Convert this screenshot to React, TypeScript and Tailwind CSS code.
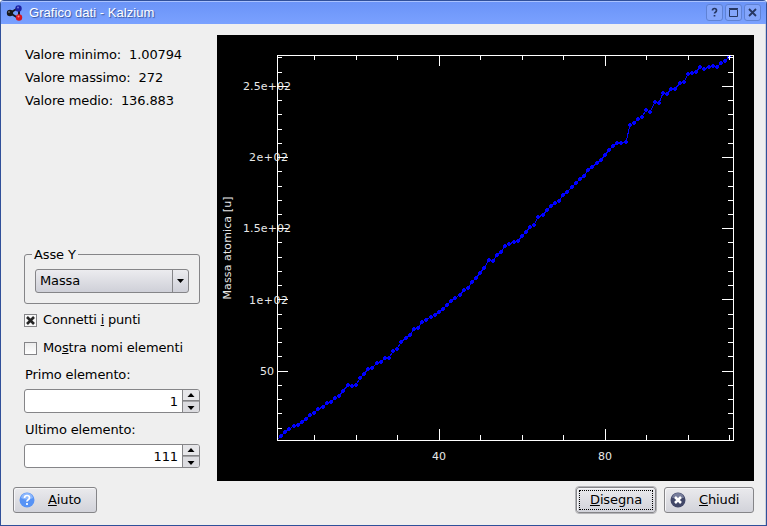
import React from "react";

const MASSES = [
  1.008, 4.003, 6.941, 9.012, 10.81, 12.01, 14.01, 16, 19, 20.18, 22.99, 24.31, 26.98, 28.09, 30.97, 32.07, 35.45,
  39.95, 39.1, 40.08, 44.96, 47.87, 50.94, 52, 54.94, 55.85, 58.93, 58.69, 63.55, 65.39, 69.72, 72.64, 74.92, 78.96,
  79.9, 83.8, 85.47, 87.62, 88.91, 91.22, 92.91, 95.94, 98.91, 101.07, 102.91, 106.42, 107.87, 112.41, 114.82, 118.71,
  121.76, 127.6, 126.9, 131.29, 132.91, 137.33, 138.91, 140.12, 140.91, 144.24, 146.92, 150.36, 151.96, 157.25, 158.93,
  162.5, 164.93, 167.26, 168.93, 173.04, 174.97, 178.49, 180.95, 183.84, 186.21, 190.23, 192.22, 195.08, 196.97,
  200.59, 204.38, 207.2, 208.98, 208.98, 209.99, 222.02, 223.02, 226.03, 227.03, 232.04, 231.04, 238.03, 237.05,
  244.06, 243.06, 247.07, 247.07, 251.08, 252.08, 257.1, 258.1, 259.1, 262.11, 261.11, 262.11, 263.12, 262.12, 265.13,
  266.13, 269, 272,
];

const px = (n: number) => Math.floor(222 + (n - 40) * 4.15 + 0.3);
const py = (m: number) => Math.max(20, Math.floor(336 - (m - 50) * 1.4245 - Math.max(0, (m - 110) * 0.0075)));

const points = MASSES.map((m, i) => ({ x: px(i + 1), y: py(m) }));
const xTicks = Array.from({ length: 11 }, (_, i) => (i + 1) * 10);
const yTicks = Array.from({ length: 27 }, (_, i) => (i + 1) * 10);

function Plot() {
  return (
    <svg className="block h-[446px] w-[537px] bg-black" viewBox="0 0 537 446">
      <g fill="#e8e8e8" fontFamily="'DejaVu Sans', sans-serif" fontSize="11">
        <text x="26" y="55" textLength="48">2.5e+02</text>
        <text x="32" y="126" textLength="39">2e+02</text>
        <text x="26" y="197" textLength="48">1.5e+02</text>
        <text x="32" y="269" textLength="39">1e+02</text>
        <text x="43" y="340" textLength="14">50</text>
        <text x="215" y="425" textLength="14">40</text>
        <text x="381" y="425" textLength="14">80</text>
        <text transform="translate(14 264.5) rotate(-90)" textLength="103">Massa atomica [u]</text>
      </g>
      <g shapeRendering="crispEdges">
        <polyline
          points={points.map((p) => `${p.x},${p.y}`).join(" ")}
          fill="none"
          stroke="#0000ff"
          strokeWidth="1"
        />
        {points.slice(1, -1).map((p, i) => (
          <path key={i} d={`M${p.x - 1} ${p.y - 2}h2v1h1v2h-1v1h-2v-1h-1v-2h1z`} fill="#0000ff" />
        ))}
        <g fill="white">
          <path d="M60 20h457v386h-457zM61 21v384h455v-384z" fillRule="evenodd" />
          {xTicks.map((n) => {
            const x = px(n);
            const major = n % 40 === 0;
            return (
              <g key={n}>
                <rect x={x} y="20" width="1" height={major ? 11 : 5} />
                <rect x={x} y={major ? 394 : 400} width="1" height={major ? 11 : 5} />
              </g>
            );
          })}
          {yTicks.map((m) => {
            const y = Math.floor(336.2 - (m - 50) * 1.4245);
            const major = m % 50 === 0;
            return (
              <g key={m}>
                <rect x="61" y={y} width={major ? 10 : 4} height="1" />
                <rect x={major ? 505 : 511} y={y} width={major ? 11 : 5} height="1" />
              </g>
            );
          })}
        </g>
      </g>
    </svg>
  );
}

function TitleButton({ children }: { children: React.ReactNode }) {
  return (
    <div className="flex h-[17px] w-[17px] items-center justify-center rounded-[3px] border border-[#5f82d4] bg-[#83a5fb]">
      <svg className="h-[11px] w-[11px] shrink-0" viewBox="0 0 11 11" fill="none" stroke="#263762">
        {children}
      </svg>
    </div>
  );
}

function SpinBox({ value }: { value: string }) {
  return (
    <div className="flex h-6 w-44 overflow-hidden rounded-[3px] border border-[#858588] bg-white">
      <div className="flex-1 pr-1 text-right leading-[23px]">{value}</div>
      <div className="flex w-[17px] flex-col border-l border-[#858588]">
        {["M4.500 7h7l-3.500-4z", "M4.500 4h7l-3.500 4z"].map((d, i) => (
          <div
            key={d}
            className={
              i === 0
                ? "h-[11px] border-b border-[#858588] bg-[#e6e6e9]"
                : "h-[11px] border-t border-[#a5a5a8] bg-[#dcdce0]"
            }
          >
            <svg className="block h-[10px] w-4" viewBox="0 0 16 10">
              <path d={d} fill="black" />
            </svg>
          </div>
        ))}
      </div>
    </div>
  );
}

const buttonStyle =
  "flex h-[26px] items-center rounded-[3px] border border-[#858588] bg-linear-to-b from-[#eaeaed] to-[#d2d3da] shadow-[inset_1px_1px_0_#f6f6f8]";

export default function App() {
  return (
    <div className="flex h-[526px] w-[767px] flex-col overflow-hidden rounded-t-[4px] border-x border-b border-[#30509a] bg-[#efefef] font-['DejaVu_Sans',sans-serif] text-[13px] tracking-[-0.12px] text-black">
      <div className="flex h-6 shrink-0 items-center border-t border-[#30509a] bg-linear-to-b from-[#6a93f7] to-[#7aa1ff] pr-[5px] pl-[5px] shadow-[inset_0_1px_0_#a9c2ff]">
        <svg className="h-[18px] w-[18px]" viewBox="0 0 18 18">
          <path d="M4 9l8-5M4 9l8 5M13 4v9" stroke="#181820" strokeWidth="2" />
          <circle cx="4" cy="9" r="3.200" fill="#18181a" />
          <circle cx="12.500" cy="4.500" r="3.200" fill="#1d22a4" />
          <circle cx="13" cy="13.500" r="3.200" fill="#d51420" />
          <circle cx="3" cy="8" r="1" fill="#66666c" />
          <circle cx="12" cy="3.500" r="1" fill="#737ad8" />
          <circle cx="12.500" cy="12.500" r="1" fill="#ff858c" />
        </svg>
        <div className="ml-[5px] flex-1 font-['Liberation_Sans',sans-serif] text-[13px] tracking-[0.05px] text-white [text-shadow:1px_1px_1px_#35539b]">
          Grafico dati - Kalzium
        </div>
        <div className="flex gap-[2px]">
          <TitleButton>
            <path d="M3.500 3.500q0-2 2-2t2 2q0 1-1 1.700t-1 1.300M5.500 8v1.500" strokeWidth="1.700" />
          </TitleButton>
          <TitleButton>
            <path d="M1.500 2.500h8v7h-8zM1 1.500h9" />
          </TitleButton>
          <TitleButton>
            <path d="M2 2l7 7M9 2l-7 7" strokeWidth="1.800" />
          </TitleButton>
        </div>
      </div>
      <div className="flex flex-1 flex-col border-r border-[#cdd0da]">
        <div className="mt-[11px] flex h-[446px] justify-between pr-[11px] pl-[23px]">
          <div className="flex w-44 flex-col">
            <div className="h-[203px] pt-2 pl-px leading-[23px] whitespace-pre">
              <div>Valore minimo:  1.00794</div>
              <div>Valore massimo:  272</div>
              <div>Valore medio:  136.883</div>
            </div>
            <fieldset className="mt-[9px] h-[57px] rounded-[3px] border border-[#858588] pl-[10px]">
              <legend className="-ml-[3px] h-[15px] px-[2px] leading-[15px]">Asse Y</legend>
              <div className="mt-[7px] flex h-6 w-[154px] rounded-[3px] border border-[#858588] bg-linear-to-b from-[#ececef] to-[#cfd0d8]">
                <div className="flex-1 pl-1 leading-[22px]">Massa</div>
                <div className="flex w-4 items-center justify-center border-l border-[#858588]">
                  <svg className="h-1 w-[7px]" viewBox="0 0 7 4">
                    <path d="M0 0h7l-3.500 4z" />
                  </svg>
                </div>
              </div>
            </fieldset>
            <div className="mt-2 flex h-4 items-center gap-[6px]">
              <svg className="h-[13px] w-[13px]" viewBox="0 0 13 13">
                <rect x=".5" y=".5" width="12" height="12" fill="#f8f8f8" stroke="#858588" />
                <path d="M3 3l7 7M10 3l-7 7" stroke="#252525" strokeWidth="2.600" />
              </svg>
              <span className="tracking-[-0.2px]">Connetti <u>i</u> punti</span>
            </div>
            <div className="mt-3 flex h-4 items-center gap-[6px]">
              <div className="h-[13px] w-[13px] border border-[#858588] bg-linear-to-b from-[#ececec] to-white" />
              <span>Mo<u>s</u>tra nomi elementi</span>
            </div>
            <div className="mt-[11px] pl-px leading-4">Primo elemento:</div>
            <div className="mt-[6px]"><SpinBox value="1" /></div>
            <div className="mt-[9px] pl-px leading-4">Ultimo elemento:</div>
            <div className="mt-[6px]"><SpinBox value="111" /></div>
          </div>
          <Plot />
        </div>
        <div className="mt-[6px] flex h-[26px] items-center pr-[11px] pl-3">
          <div className={`${buttonStyle} w-[84px] pl-[5px]`}>
            <svg className="h-4 w-4" viewBox="0 0 16 16">
              <circle cx="8" cy="8" r="7.500" fill="#5793f5" />
              <path d="M2 6q1-5 6-5t6 5q-6 3-12 0z" fill="#8db8fd" />
              <path d="M5.500 6q0-2.500 2.500-2.500t2.500 2.300q0 1.200-1.300 2T8 9.700M8 11v2" fill="none" stroke="white" strokeWidth="1.700" />
            </svg>
            <span className="ml-[13px]"><u>A</u>iuto</span>
          </div>
          <div className="flex-1" />
          <div className={`${buttonStyle} w-[80px] p-[2px] outline outline-[#b4b4b8]`}>
            <div className="flex h-5 w-full items-center justify-center border border-dotted border-black"><span><u>D</u>isegna</span></div>
          </div>
          <div className={`${buttonStyle} ml-2 w-[90px] pl-[5px]`}>
            <svg className="h-4 w-4" viewBox="0 0 16 16">
              <circle cx="8" cy="8" r="7.500" fill="#414768" />
              <path d="M2 6q1-5 6-5t6 5z" fill="#777d9b" />
              <path d="M5 5l6 6M11 5l-6 6" stroke="white" strokeWidth="2.500" />
            </svg>
            <span className="ml-[13px]"><u>C</u>hiudi</span>
          </div>
        </div>
      </div>
    </div>
  );
}
